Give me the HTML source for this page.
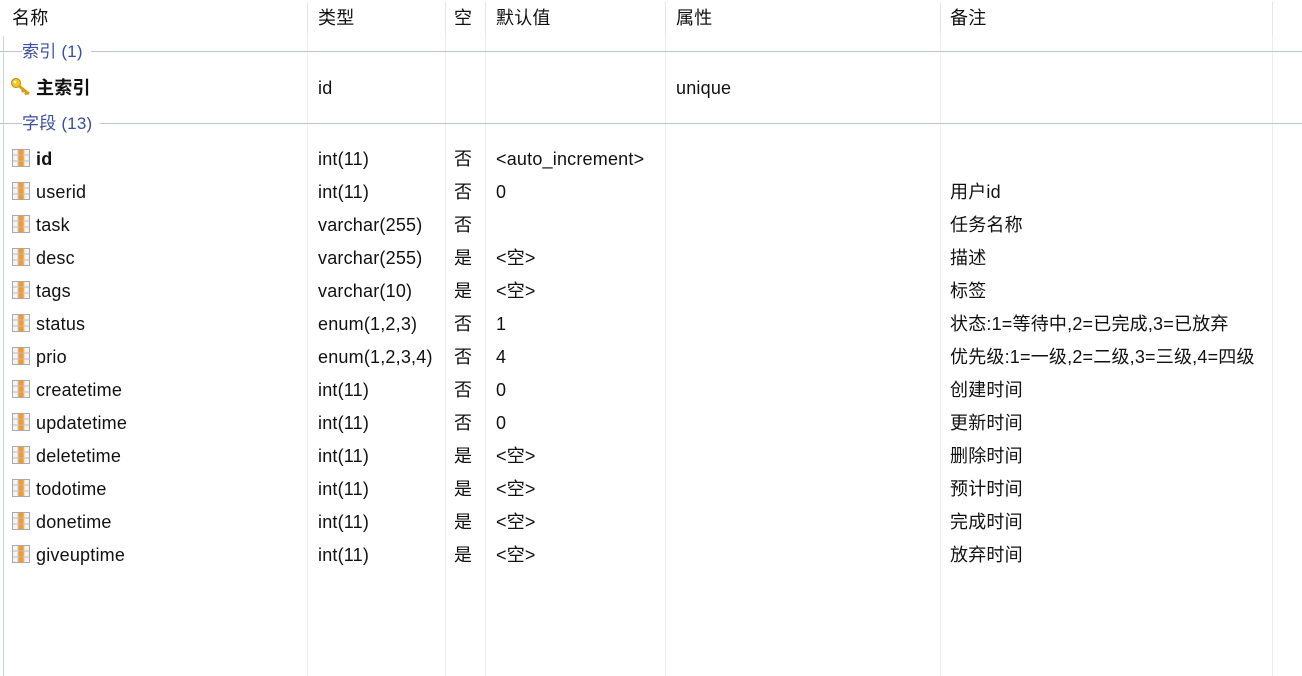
<!DOCTYPE html>
<html><head><meta charset="utf-8"><style>
body{margin:0;width:1302px;height:676px;background:#fff;overflow:hidden;font-family:"Liberation Sans","Noto Sans CJK SC",sans-serif;font-size:18px;letter-spacing:0.2px;color:#111;position:relative}
.vl{position:absolute;top:0;bottom:0;width:1px;background:#e8eef7}
.hd{position:absolute;top:0;left:0;right:0;height:36px;background:#fff}
.hd .s{position:absolute;top:2px;height:34px;width:1px;background:#e6e6e6}
.t{position:absolute;white-space:nowrap;line-height:20px}
.g{position:absolute;left:0;right:0;height:1px;background:#b9c6e0}
.gl{position:absolute;color:#3a4fa0;background:#fff;padding-right:8px;line-height:20px;font-size:17px}
.ic{position:absolute;left:12px;width:18px;height:18px}
</style></head><body>
<div style="position:absolute;left:3px;top:0;bottom:0;width:1px;background:#c9d3e3"></div>
<div style="position:absolute;left:0;right:0;top:0;height:2px;background:#f0f2f7"></div>
<div class="vl" style="left:307px"></div><div class="vl" style="left:445px"></div><div class="vl" style="left:485px"></div><div class="vl" style="left:665px"></div><div class="vl" style="left:940px"></div><div class="vl" style="left:1272px"></div>
<div class="hd"><div class="s" style="left:307px"></div><div class="s" style="left:445px"></div><div class="s" style="left:485px"></div><div class="s" style="left:665px"></div><div class="s" style="left:940px"></div><div class="s" style="left:1272px"></div></div>
<div class="t" style="left:12px;top:8px">名称</div><div class="t" style="left:318px;top:8px">类型</div><div class="t" style="left:454px;top:8px">空</div><div class="t" style="left:496px;top:8px">默认值</div><div class="t" style="left:676px;top:8px">属性</div><div class="t" style="left:950px;top:8px">备注</div>
<div class="g" style="top:51px"></div><div class="gl" style="left:22px;top:42px">索引 (1)</div>
<svg class="ic" style="top:77px;left:10px;width:22px;height:20px" viewBox="0 0 22 20"><circle cx="6" cy="6" r="4.5" fill="#f3c81e" stroke="#b8860b"/><circle cx="5" cy="5" r="1.3" fill="#fff"/><path d="M9 9l10 8M14 13l-2 2M17 15.5l-2 2" stroke="#d4a017" stroke-width="3" fill="none"/></svg>
<div class="t" style="left:36px;top:78px;font-weight:bold">主索引</div><div class="t" style="left:318px;top:78px">id</div><div class="t" style="left:676px;top:78px">unique</div>
<div class="g" style="top:123px"></div><div class="gl" style="left:22px;top:114px">字段 (13)</div>
<div id="rows"></div>
<script>
var r=[["id","int(11)","否","<auto_increment>",""],["userid","int(11)","否","0","用户id"],["task","varchar(255)","否","","任务名称"],["desc","varchar(255)","是","<空>","描述"],["tags","varchar(10)","是","<空>","标签"],["status","enum(1,2,3)","否","1","状态:1=等待中,2=已完成,3=已放弃"],["prio","enum(1,2,3,4)","否","4","优先级:1=一级,2=二级,3=三级,4=四级"],["createtime","int(11)","否","0","创建时间"],["updatetime","int(11)","否","0","更新时间"],["deletetime","int(11)","是","<空>","删除时间"],["todotime","int(11)","是","<空>","预计时间"],["donetime","int(11)","是","<空>","完成时间"],["giveuptime","int(11)","是","<空>","放弃时间"]];
var h="";function e(s){return s.replace(/</g,"&lt;").replace(/>/g,"&gt;")}
r.forEach(function(a,i){var y=149+i*33;
h+='<svg class="ic" style="top:'+y+'px" viewBox="0 0 18 18"><rect x="0.5" y="0.5" width="17" height="17" fill="#f4f4f4" stroke="#aaa"/><rect x="6" y="1" width="6" height="16" fill="#f39a2a"/><path d="M1 6h17M1 12h17" stroke="#bbb"/><path d="M6 1v16M12 1v16" stroke="#ccc"/></svg>';
h+='<div class="t" style="left:36px;top:'+y+'px;'+(i==0?'font-weight:bold':'')+'">'+a[0]+'</div>';
h+='<div class="t" style="left:318px;top:'+y+'px">'+a[1]+'</div><div class="t" style="left:454px;top:'+y+'px">'+a[2]+'</div><div class="t" style="left:496px;top:'+y+'px">'+e(a[3])+'</div><div class="t" style="left:950px;top:'+y+'px">'+a[4]+'</div>';});
document.getElementById("rows").innerHTML=h;
</script>
</body></html>
